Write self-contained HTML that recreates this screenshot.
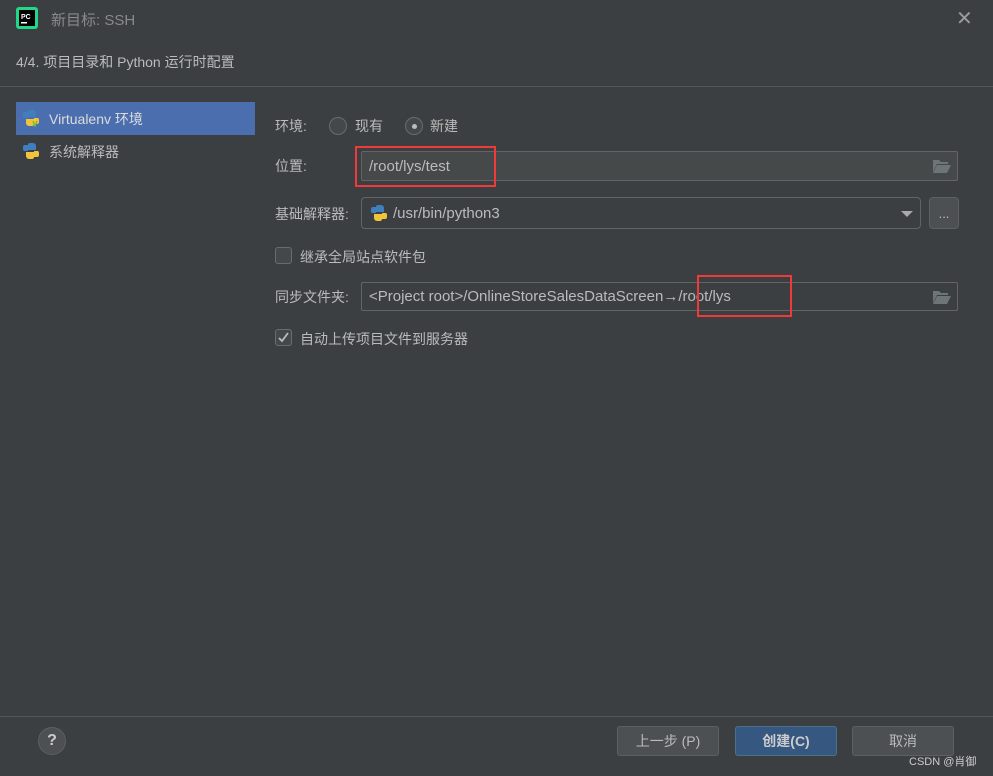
<!DOCTYPE html>
<html><head><meta charset="utf-8"><style>
body{margin:0;width:993px;height:776px;background:#3c3f41;font-family:"Liberation Sans","Noto Sans CJK SC",sans-serif;color:#bbbbbb;font-size:14px;position:relative;overflow:hidden}
.a{position:absolute}
.field{position:absolute;border:1px solid #646464;box-sizing:border-box;background:#3c3f41;border-radius:2px}
.btn{position:absolute;top:726px;height:30px;width:102px;box-sizing:border-box;border:1px solid #5e6060;border-radius:3px;background:#4c5052;text-align:center;line-height:28px;font-size:14px}
.red{position:absolute;border:2px solid #f03a3a;box-sizing:border-box}
.cb{position:absolute;width:17px;height:17px;border:1px solid #6b6b6b;box-sizing:border-box;border-radius:3px;background:#43494a}
.rad{position:absolute;width:18px;height:18px;border:1px solid #6b6b6b;box-sizing:border-box;border-radius:50%;background:#43494a}
</style></head><body>
<svg class="a" style="left:16px;top:7px" width="22" height="22" viewBox="0 0 22 22"><rect x="0" y="0" width="22" height="22" rx="3" fill="#21d789"/><rect x="3" y="3" width="16" height="16" fill="#000"/><text x="5" y="12" font-size="7" fill="#fff" font-family="Liberation Sans" font-weight="bold">PC</text><rect x="5" y="15" width="6" height="1.5" fill="#fff"/></svg>
<div class="a" style="left:51px;top:9px;font-size:15px;color:#8a8a8a">新目标: SSH</div>
<div class="a" style="left:956px;top:6px;font-size:20px;color:#9a9a9a">✕</div>
<div class="a" style="left:16px;top:52px;font-size:14px;color:#bbb">4/4. 项目目录和 Python 运行时配置</div>
<div class="a" style="left:0;top:86px;width:993px;height:1px;background:#555"></div>
<div class="a" style="left:16px;top:102px;width:239px;height:33px;background:#4b6eaf"></div>
<svg class="a" style="left:22px;top:109px" width="18" height="18" viewBox="0 0 18 18"><path d="M8 1h3a3 3 0 013 3v4H6v1H2a2 2 0 01-1-2V5a2 2 0 012-2h3a2 2 0 012-2z" fill="#3f7fbf"/><path d="M10 17H7a3 3 0 01-3-3v-4h8V9h4a2 2 0 011 2v2a2 2 0 01-2 2h-3a2 2 0 01-2 2z" fill="#f2c43c"/><path d="M11 12l2 5 2-5" stroke="#6fbf3f" stroke-width="1.5" fill="none"/></svg>
<div class="a" style="left:49px;top:109px;color:#dcdcdc">Virtualenv 环境</div>
<svg class="a" style="left:22px;top:142px" width="18" height="18" viewBox="0 0 18 18"><path d="M8 1h3a3 3 0 013 3v4H6v1H2a2 2 0 01-1-2V5a2 2 0 012-2h3a2 2 0 012-2z" fill="#3f7fbf"/><path d="M10 17H7a3 3 0 01-3-3v-4h8V9h4a2 2 0 011 2v2a2 2 0 01-2 2h-3a2 2 0 01-2 2z" fill="#f2c43c"/></svg>
<div class="a" style="left:49px;top:142px">系统解释器</div>

<div class="a" style="left:275px;top:116px">环境:</div>
<div class="rad" style="left:329px;top:117px"></div>
<div class="a" style="left:355px;top:116px">现有</div>
<div class="rad" style="left:405px;top:117px"><div class="a" style="left:6px;top:6px;width:5px;height:5px;border-radius:50%;background:#bbb"></div></div>
<div class="a" style="left:430px;top:116px">新建</div>

<div class="a" style="left:275px;top:156px">位置:</div>
<div class="field" style="left:361px;top:151px;width:597px;height:30px;background:#45494a"></div>
<div class="a" style="left:369px;top:158px;font-size:15px">/root/lys/test</div>
<svg class="a" style="left:932px;top:158px" width="19" height="15" viewBox="0 0 19 15"><path d="M1 2h6l2 2h7v2H5L1 14z" fill="#6e7577"/><path d="M5 7h14l-4 8H1z" fill="#6e7577"/></svg>
<div class="red" style="left:355px;top:146px;width:141px;height:41px"></div>

<div class="a" style="left:275px;top:204px">基础解释器:</div>
<div class="field" style="left:361px;top:197px;width:560px;height:32px;border-radius:4px"></div>
<svg class="a" style="left:370px;top:204px" width="18" height="18" viewBox="0 0 18 18"><path d="M8 1h3a3 3 0 013 3v4H6v1H2a2 2 0 01-1-2V5a2 2 0 012-2h3a2 2 0 012-2z" fill="#3f7fbf"/><path d="M10 17H7a3 3 0 01-3-3v-4h8V9h4a2 2 0 011 2v2a2 2 0 01-2 2h-3a2 2 0 01-2 2z" fill="#f2c43c"/></svg>
<div class="a" style="left:393px;top:205px;font-size:15px">/usr/bin/python3</div>
<div class="a" style="left:901px;top:211px;width:0;height:0;border-left:6px solid transparent;border-right:6px solid transparent;border-top:6px solid #aaa"></div>
<div class="a" style="left:929px;top:197px;width:30px;height:32px;box-sizing:border-box;border:1px solid #5e6060;border-radius:4px;background:#4c5052;text-align:center;line-height:32px;font-size:13px">...</div>

<div class="cb" style="left:275px;top:247px"></div>
<div class="a" style="left:300px;top:247px">继承全局站点软件包</div>

<div class="a" style="left:275px;top:287px">同步文件夹:</div>
<div class="field" style="left:361px;top:282px;width:597px;height:29px"></div>
<div class="a" style="left:369px;top:288px;font-size:15px">&lt;Project root&gt;/OnlineStoreSalesDataScreen→/root/lys</div>
<svg class="a" style="left:932px;top:289px" width="19" height="15" viewBox="0 0 19 15"><path d="M1 2h6l2 2h7v2H5L1 14z" fill="#6e7577"/><path d="M5 7h14l-4 8H1z" fill="#6e7577"/></svg>
<div class="red" style="left:697px;top:275px;width:95px;height:42px"></div>

<div class="cb" style="left:275px;top:329px"><svg width="15" height="15" viewBox="0 0 15 15" style="position:absolute;left:0;top:0"><path d="M3 8l3 3 6-8" stroke="#bbb" stroke-width="1.8" fill="none"/></svg></div>
<div class="a" style="left:300px;top:329px">自动上传项目文件到服务器</div>

<div class="a" style="left:0;top:716px;width:993px;height:1px;background:#555"></div>
<div class="a" style="left:38px;top:727px;width:28px;height:28px;border-radius:50%;background:#4c5052;border:1px solid #5e6060;box-sizing:border-box;text-align:center;line-height:26px;font-size:16px;font-weight:bold;color:#ccc">?</div>
<div class="btn" style="left:617px">上一步 (P)</div>
<div class="btn" style="left:735px;background:#365880;border-color:#4c708c;font-weight:bold;color:#ccc">创建(C)</div>
<div class="btn" style="left:852px">取消</div>
<div class="a" style="left:909px;top:753px;font-size:11px;color:#ccc">CSDN @肖御</div>
</body></html>
